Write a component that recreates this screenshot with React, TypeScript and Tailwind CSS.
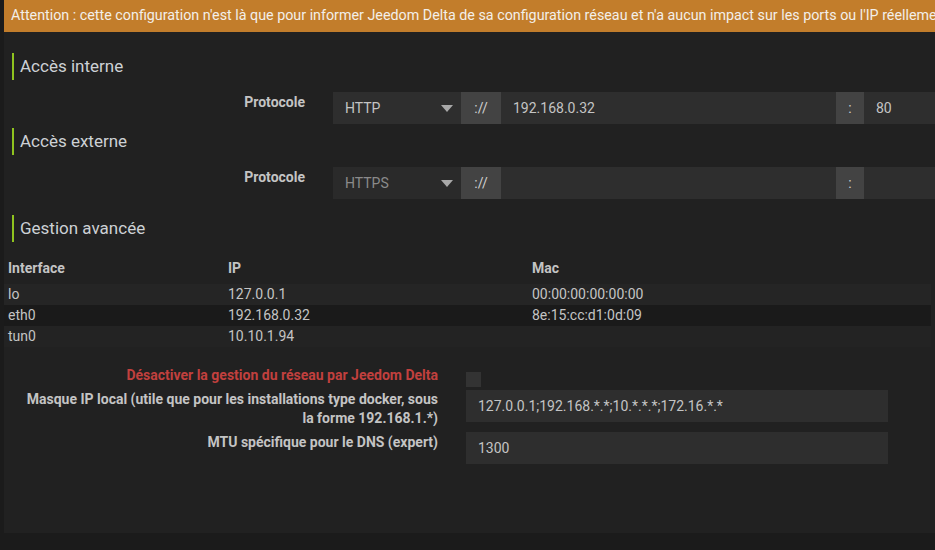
import React from 'react';

const font = { fontFamily: 'Roboto, "Liberation Sans", sans-serif' };

const SectionTitle = ({ title }: { title: string }) => (
  <div className="ml-[8px] h-[27px] border-l-2 border-[#8fc31f] pl-[6px] flex items-center">
    <span className="text-[17px] text-[#cdd1d5] leading-none">{title}</span>
  </div>
);

const Arrow = () => (
  <svg width="12" height="7" viewBox="0 0 12 7" className="shrink-0">
    <path d="M0 0 L12 0 L6 7 Z" fill="#a8a8a8" />
  </svg>
);

interface ProtoRowProps {
  proto: string;
  host: string;
  port: string;
  disabled?: boolean;
}

// Protocole :// host : port
const ProtoRow = ({ proto, host, port, disabled }: ProtoRowProps) => (
  <div className="flex items-start">
    <div className="w-[329px] pr-[28px] pt-[1px] text-right text-[14px] font-bold text-[#c4c4c4] leading-[19px]">
      Protocole
    </div>
    <div className="flex h-[32px] flex-1 text-[14px]">
      <div
        className={`w-[128px] flex items-center justify-between pl-[12px] pr-[8px] ${
          disabled ? 'bg-[#2a2a2a] text-[#8a8a8a]' : 'bg-[#2e2e2e] text-[#c4c4c4]'
        }`}
      >
        <span>{proto}</span>
        <Arrow />
      </div>
      <div className="w-[40px] bg-[#434343] text-[#d0d0d0] flex items-center justify-center">://</div>
      <div className="w-[335px] bg-[#2e2e2e] text-[#c4c4c4] flex items-center pl-[12px]">{host}</div>
      <div className="w-[28px] bg-[#434343] text-[#d0d0d0] flex items-center justify-center">:</div>
      <div className="flex-1 bg-[#2e2e2e] text-[#c4c4c4] flex items-center pl-[12px]">{port}</div>
    </div>
  </div>
);

const rows = [
  { name: 'lo', ip: '127.0.0.1', mac: '00:00:00:00:00:00', bg: 'bg-[#252525]' },
  { name: 'eth0', ip: '192.168.0.32', mac: '8e:15:cc:d1:0d:09', bg: 'bg-[#1a1a1a]' },
  { name: 'tun0', ip: '10.10.1.94', mac: '', bg: 'bg-[#232323]' },
];

export default function App() {
  return (
    <div className="w-[935px] h-[550px] bg-[#1b1b1b] overflow-hidden" style={font}>
      <div className="ml-[4px] h-[533px] bg-[#212121] flex flex-col">
        {/* Warning banner */}
        <div className="h-[32px] bg-[#c27d2b] text-[#f3efe9] text-[14.3px] pl-[7px] flex items-center whitespace-nowrap overflow-hidden">
          Attention : cette configuration n'est là que pour informer Jeedom Delta de sa configuration réseau et n'a aucun impact sur les ports ou l'IP réellement
        </div>

        <div className="mt-[21px]">
          <SectionTitle title="Accès interne" />
        </div>
        <div className="mt-[12px]">
          <ProtoRow proto="HTTP" host="192.168.0.32" port="80" />
        </div>

        <div className="mt-[4px]">
          <SectionTitle title="Accès externe" />
        </div>
        <div className="mt-[12px]">
          <ProtoRow proto="HTTPS" host="" port="" disabled />
        </div>

        <div className="mt-[16px]">
          <SectionTitle title="Gestion avancée" />
        </div>

        {/* Interfaces table */}
        <div className="mt-[16px] w-[927px] text-[14px] text-[#c4c4c4]">
          <div className="flex h-[26px] items-start leading-[20px] font-bold">
            <div className="w-[220px] px-[4px]">Interface</div>
            <div className="w-[304px] px-[4px]">IP</div>
            <div className="flex-1 px-[4px]">Mac</div>
          </div>
          {rows.map((r) => (
            <div key={r.name} className={`flex h-[21px] items-center ${r.bg}`}>
              <div className="w-[220px] px-[4px]">{r.name}</div>
              <div className="w-[304px] px-[4px]">{r.ip}</div>
              <div className="flex-1 px-[4px]">{r.mac}</div>
            </div>
          ))}
        </div>

        {/* Advanced form */}
        <div className="mt-[19px] flex flex-col text-[14px] font-bold leading-[19px]">
          <div className="flex items-start h-[24px]">
            <div className="w-[462px] pr-[28px] text-right text-[#c2403e]">
              Désactiver la gestion du réseau par Jeedom Delta
            </div>
            <div className="mt-[6px] w-[15px] h-[15px] bg-[#333333]" />
          </div>
          <div className="flex items-start">
            <div className="w-[462px] pr-[28px] text-right text-[#c4c4c4]">
              Masque IP local (utile que pour les installations type docker, sous
              <br />
              la forme 192.168.1.*)
            </div>
            <div className="w-[422px] h-[32px] bg-[#2e2e2e] flex items-center pl-[12px] text-[14px] font-normal text-[#c4c4c4]">
              127.0.0.1;192.168.*.*;10.*.*.*;172.16.*.*
            </div>
          </div>
          <div className="mt-[4px] flex items-start">
            <div className="w-[462px] pr-[28px] pt-[1px] text-right text-[#c4c4c4]">
              MTU spécifique pour le DNS (expert)
            </div>
            <div className="w-[422px] h-[32px] bg-[#2e2e2e] flex items-center pl-[12px] text-[14px] font-normal text-[#c4c4c4]">
              1300
            </div>
          </div>
        </div>
      </div>
    </div>
  );
}
